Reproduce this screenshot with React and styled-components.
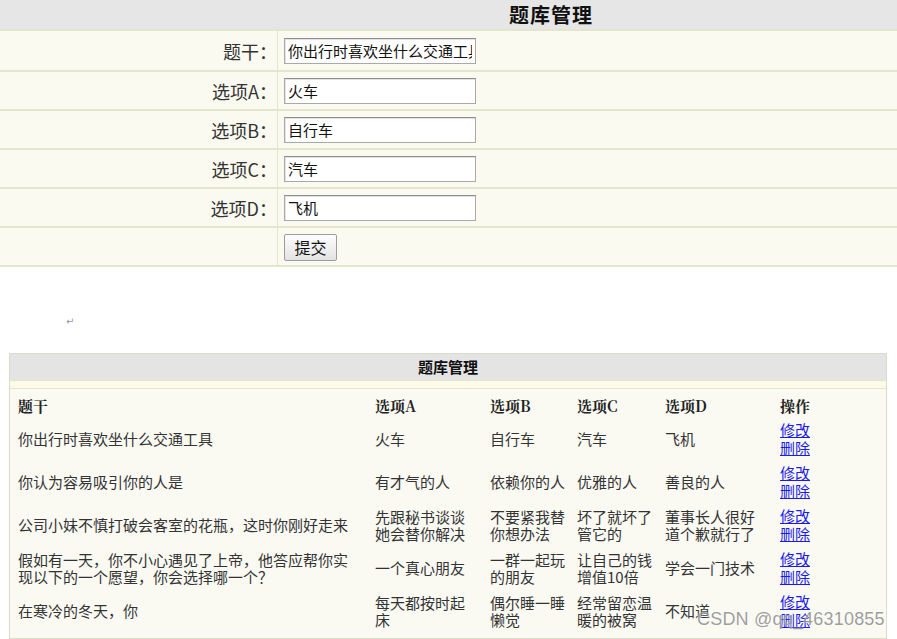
import React from 'react';
import styled, { createGlobalStyle } from 'styled-components';

const Global = createGlobalStyle`
  html, body { margin: 0; padding: 0; background: #fff; }
  body {
    font-family: "Noto Sans CJK SC", "DejaVu Sans", sans-serif;
    color: #333;
    overflow: hidden;
  }
`;

const Page = styled.div`
  position: relative;
  width: 897px;
  height: 639px;
`;

/* ---------- top form ---------- */

const FormTable = styled.div`
  width: 100%;
  background: #fafaf0;
  border-bottom: 2px solid #e3e6cd;
`;

const FormTitle = styled.div`
  height: 31px;
  background: #e6e6e6;
  border-bottom: 2px solid #e3e6cd;
  box-sizing: border-box;
  padding-left: 509px;
  font-size: 20px;
  font-weight: 700;
  line-height: 30px;
  color: #111;
  letter-spacing: 1px;
`;

const FormRow = styled.div`
  display: grid;
  grid-template-columns: 278px 1fr;
  height: 39px;
  box-sizing: border-box;
  border-top: ${({ first }) => (first ? 'none' : '2px solid #e3e6cd')};
`;

const Label = styled.div`
  border-right: 1px solid #e3e6cd;
  display: flex;
  align-items: center;
  justify-content: flex-end;
  padding-right: 0;
  font-size: 18px;
  color: #333;
`;

const Field = styled.div`
  display: flex;
  align-items: center;
  padding-left: 6px;
`;

const Input = styled.input`
  width: 192px;
  height: 26px;
  box-sizing: border-box;
  border: 1px solid #a9a9a9;
  border-top-color: #8c8c8c;
  box-shadow: inset 1px 1px 0 #e3e3e3;
  padding: 0 3px;
  font-family: "Noto Sans CJK SC", sans-serif;
  font-size: 15px;
  color: #111;
  background: #fff;
  outline: none;
`;

const Button = styled.button`
  width: 53px;
  height: 27px;
  margin-top: 1px;
  border: 1px solid #9c9c9c;
  border-radius: 2px;
  background: linear-gradient(#fdfdfd, #e3e3e3);
  font-family: "Noto Sans CJK SC", sans-serif;
  font-size: 16px;
  color: #111;
  padding: 0;
`;

const Return = styled.div`
  margin: 46px 0 0 66px;
  height: 40px;
  font-size: 10px;
  color: #999;
`;

/* ---------- lower list ---------- */

const ListTable = styled.div`
  margin-left: 9px;
  width: 878px;
  height: 286px;
  box-sizing: border-box;
  border: 1px solid #dcdcc8;
  background: #fafaf3;
`;

const ListTitle = styled.div`
  height: 26px;
  background: #e4e4e4;
  border-bottom: 1px solid #e3e6cd;
  text-align: center;
  font-size: 15px;
  font-weight: 700;
  line-height: 26px;
  color: #111;
`;

const Stripe = styled.div`
  height: 7px;
  background: #fbfbe8;
  border-bottom: 1px solid #e3e6cd;
`;

const Grid = styled.div`
  display: grid;
  grid-template-columns: 357px 115px 87px 88px 115px 1fr;
  grid-template-rows: 28px repeat(5, 43px);
`;

const HeadCell = styled.div`
  display: flex;
  align-items: center;
  padding: 4px 0 0 8px;
  font-size: 15px;
  font-weight: 700;
  color: #222;
  font-family: "Noto Serif CJK SC", "Noto Sans CJK SC", serif;
`;

const Cell = styled.div`
  display: flex;
  align-items: center;
  padding: 0 ${({ pr }) => pr || 4}px 0 8px;
  font-size: 15px;
  line-height: 17px;
  color: #333;
  word-break: break-all;
`;

const Ops = styled.div`
  display: flex;
  flex-direction: column;
  justify-content: center;
  padding-left: 8px;
  font-size: 15px;
  line-height: 18px;
`;

const Link = styled.a`
  color: #1a1aee;
  text-decoration: underline;
`;

const Watermark = styled.div`
  position: absolute;
  left: 697px;
  top: 609px;
  font-family: "Liberation Sans", Arial, sans-serif;
  font-size: 18px;
  color: rgba(140, 140, 140, 0.85);
  text-shadow: 0 0 2px rgba(255, 255, 255, 0.9);
  letter-spacing: 0.2px;
  pointer-events: none;
`;

const formFields = [
  ['题干：', '你出行时喜欢坐什么交通工具'],
  ['选项A：', '火车'],
  ['选项B：', '自行车'],
  ['选项C：', '汽车'],
  ['选项D：', '飞机'],
];

const heads = ['题干', '选项A', '选项B', '选项C', '选项D', '操作'];

const rows = [
  ['你出行时喜欢坐什么交通工具', '火车', '自行车', '汽车', '飞机'],
  ['你认为容易吸引你的人是', '有才气的人', '依赖你的人', '优雅的人', '善良的人'],
  ['公司小妹不慎打破会客室的花瓶，这时你刚好走来', '先跟秘书谈谈她会替你解决', '不要紧我替你想办法', '坏了就坏了管它的', '董事长人很好道个歉就行了'],
  ['假如有一天，你不小心遇见了上帝，他答应帮你实现以下的一个愿望，你会选择哪一个？', '一个真心朋友', '一群一起玩的朋友', '让自己的钱增值10倍', '学会一门技术'],
  ['在寒冷的冬天，你', '每天都按时起床', '偶尔睡一睡懒觉', '经常留恋温暖的被窝', '不知道'],
];

const padRight = [16, 9, 4, 2, 12];

export default function App() {
  return (
    <Page>
      <Global />
      <FormTable>
        <FormTitle>题库管理</FormTitle>
        {formFields.map(([label, value], i) => (
          <FormRow key={label} first={i === 0}>
            <Label>{label}</Label>
            <Field>
              <Input defaultValue={value} />
            </Field>
          </FormRow>
        ))}
        <FormRow>
          <Label />
          <Field>
            <Button>提交</Button>
          </Field>
        </FormRow>
      </FormTable>

      <Return>↵</Return>

      <ListTable>
        <ListTitle>题库管理</ListTitle>
        <Stripe />
        <Grid>
          {heads.map((h) => (
            <HeadCell key={h}>{h}</HeadCell>
          ))}
          {rows.map((r) => (
            <React.Fragment key={r[0]}>
              {r.map((c, j) => (
                <Cell key={j} pr={padRight[j]}>{c}</Cell>
              ))}
              <Ops>
                <Link href="#">修改</Link>
                <Link href="#">删除</Link>
              </Ops>
            </React.Fragment>
          ))}
        </Grid>
      </ListTable>

      <Watermark>CSDN @qq_46310855</Watermark>
    </Page>
  );
}
